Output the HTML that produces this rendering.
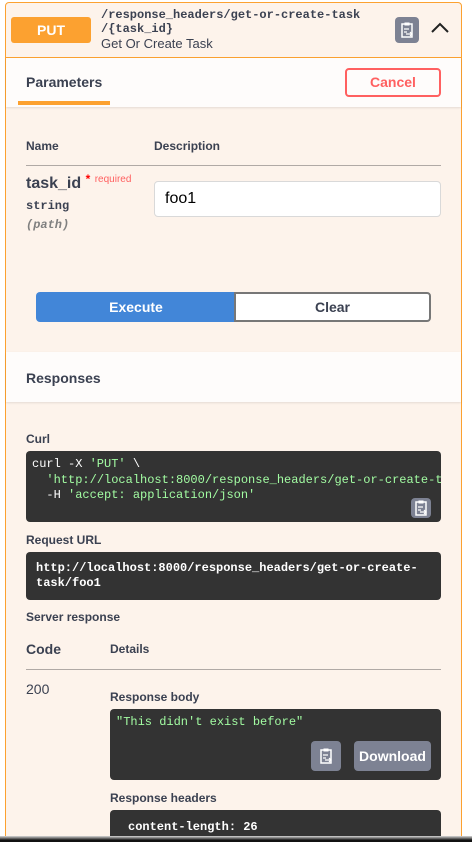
<!DOCTYPE html>
<html style="width:472px;height:842px;overflow:hidden"><head><style>
*{box-sizing:border-box;margin:0;padding:0}
body{width:472px;height:842px;overflow:hidden;background:#fff;font-family:"Liberation Sans",sans-serif;color:#3b4151;position:relative}
.a{position:absolute}
.mono{font-family:"Liberation Mono",monospace}
.wrap{left:5px;top:2px;width:457px;height:845px;border:1px solid #fca130;border-radius:4px;background:#fdf3eb}
.code{background:#333;border-radius:4px}
.b{font-weight:bold}
.cp{background:#7d8293;border-radius:4px}
</style></head><body>
<div class="a wrap"></div>
<div class="a" style="left:6px;top:57px;width:455px;height:1px;background:#fca130"></div>
<div class="a" style="left:11px;top:17px;width:80px;height:26px;background:#fca130;border-radius:3px;color:#fff;font-weight:bold;font-size:14px;text-align:center;line-height:26px">PUT</div>
<div class="a mono b" style="left:101px;top:8px;font-size:12px;line-height:14px;color:#3b4151">/response_headers/get-or-create-task<br>/{task_id}</div>
<div class="a" style="left:101px;top:36px;font-size:13px;color:#3b4151">Get Or Create Task</div>
<div class="a cp" style="left:395px;top:17px;width:24px;height:26px"><svg width="24" height="26" viewBox="0 0 24 26"><rect x="7" y="7" width="10" height="13" fill="none" stroke="#fff" stroke-width="1.5"/><rect x="9.5" y="5.5" width="5" height="3" fill="#fff"/><path d="M9 12h5M9 15h3M11 17h6M15 15l2 2-2 2" stroke="#fff" stroke-width="1.2" fill="none"/></svg></div>
<svg class="a" style="left:430px;top:20px" width="20" height="16"><path d="M2 12L10 4L18 12" stroke="#222" stroke-width="2" fill="none"/></svg>
<div class="a" style="left:6px;top:58px;width:455px;height:49px;background:#fefcfb;box-shadow:0 1px 2px rgba(0,0,0,.1)"></div>
<div class="a b" style="left:26px;top:74px;font-size:14px">Parameters</div>
<div class="a" style="left:18px;top:101px;width:92px;height:4px;background:#fca130"></div>
<div class="a" style="left:345px;top:68px;width:96px;height:29px;border:2px solid #ff6060;border-radius:4px;color:#ff6060;font-weight:bold;font-size:14px;text-align:center;line-height:25px">Cancel</div>
<div class="a b" style="left:26px;top:139px;font-size:12px">Name</div>
<div class="a b" style="left:154px;top:139px;font-size:12px">Description</div>
<div class="a" style="left:26px;top:165px;width:415px;height:1px;background:#b0a9a5"></div>
<div class="a b" style="left:26px;top:175px;font-size:16px">task_id <span style="color:#ff0000;font-size:12px;position:relative;top:-5px">*</span> <span style="color:#ff6060;font-size:10px;font-weight:normal;position:relative;top:-6px">required</span></div>
<div class="a mono b" style="left:26px;top:199px;font-size:12px">string</div>
<div class="a mono b" style="left:26px;top:218px;font-size:12px;font-style:italic;color:#808080">(path)</div>
<div class="a" style="left:154px;top:181px;width:287px;height:36px;background:#fff;border:1px solid #d9d9d9;border-radius:4px;font-size:16px;padding:8px 10px;color:#000">foo1</div>
<div class="a" style="left:36px;top:292px;width:200px;height:30px;background:#4286d8;border-radius:4px 0 0 4px;color:#fff;font-weight:bold;font-size:14px;text-align:center;line-height:30px">Execute</div>
<div class="a" style="left:234px;top:292px;width:197px;height:30px;background:#fff;border:2px solid #777;border-radius:0 4px 4px 0;font-weight:bold;font-size:14px;text-align:center;line-height:26px">Clear</div>
<div class="a" style="left:6px;top:352px;width:455px;height:50px;background:#fefcfb;box-shadow:0 1px 2px rgba(0,0,0,.1)"></div>
<div class="a b" style="left:26px;top:370px;font-size:14px">Responses</div>
<div class="a b" style="left:26px;top:432px;font-size:12px">Curl</div>
<div class="a code mono" style="left:26px;top:451px;width:415px;height:71px;overflow:hidden;padding:6px;font-size:12px;line-height:15.5px;color:#fff;white-space:pre">curl -X <span style="color:#a2fca2">'PUT'</span> \
  <span style="color:#a2fca2">'http://localhost:8000/response_headers/get-or-create-task/foo1'</span> \
  -H <span style="color:#a2fca2">'accept: application/json'</span></div>
<div class="a cp" style="left:411px;top:498px;width:20px;height:20px"><svg width="20" height="20" viewBox="2 3 20 20"><rect x="7" y="7" width="10" height="13" fill="none" stroke="#fff" stroke-width="1.5"/><rect x="9.5" y="5.5" width="5" height="3" fill="#fff"/><path d="M9 12h5M9 15h3M11 17h6M15 15l2 2-2 2" stroke="#fff" stroke-width="1.2" fill="none"/></svg></div>
<div class="a b" style="left:26px;top:533px;font-size:12px">Request URL</div>
<div class="a code mono b" style="left:26px;top:552px;width:415px;height:48px;padding:9px 10px;font-size:12px;line-height:15px;color:#fff">http://localhost:8000/response_headers/get-or-create-<br>task/foo1</div>
<div class="a b" style="left:26px;top:610px;font-size:12px">Server response</div>
<div class="a b" style="left:26px;top:641px;font-size:14px">Code</div>
<div class="a b" style="left:110px;top:642px;font-size:12px">Details</div>
<div class="a" style="left:26px;top:669px;width:415px;height:1px;background:#b0a9a5"></div>
<div class="a" style="left:26px;top:681px;font-size:14px">200</div>
<div class="a b" style="left:110px;top:690px;font-size:12px">Response body</div>
<div class="a code mono" style="left:110px;top:709px;width:331px;height:71px;padding:6px;font-size:12px;color:#a2fca2">"This didn't exist before"</div>
<div class="a cp" style="left:311px;top:741px;width:30px;height:30px"><svg width="30" height="30" viewBox="-3 -2 30 30"><rect x="7" y="7" width="10" height="13" fill="none" stroke="#fff" stroke-width="1.5"/><rect x="9.5" y="5.5" width="5" height="3" fill="#fff"/><path d="M9 12h5M9 15h3M11 17h6M15 15l2 2-2 2" stroke="#fff" stroke-width="1.2" fill="none"/></svg></div>
<div class="a cp b" style="left:354px;top:741px;width:77px;height:30px;color:#fff;font-size:14px;text-align:center;line-height:30px">Download</div>
<div class="a b" style="left:110px;top:791px;font-size:12px">Response headers</div>
<div class="a code mono b" style="left:110px;top:810px;width:331px;height:32px;overflow:hidden;padding:10px 18px;font-size:12px;line-height:15px;color:#fff">content-length: 26<br>content-type: application/json</div>
<div class="a" style="left:0;top:836px;width:472px;height:6px;background:linear-gradient(#d8d8d8,#111 70%)"></div>
</body></html>
